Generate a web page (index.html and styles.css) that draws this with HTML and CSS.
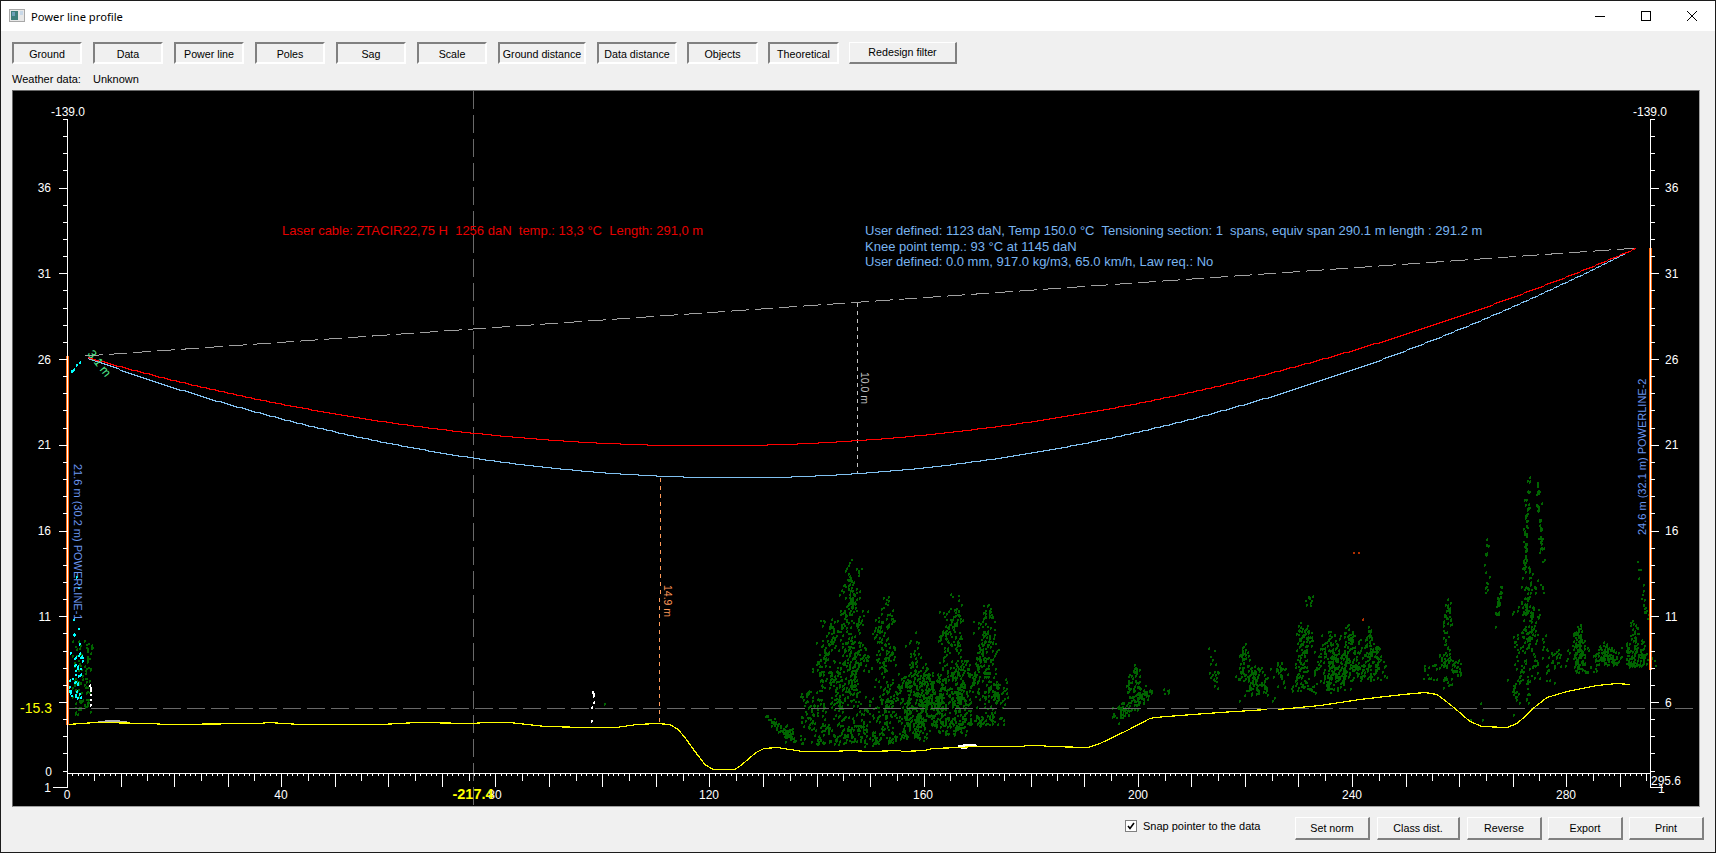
FILE: index.html
```html
<!DOCTYPE html>
<html lang="en">
<head>
<meta charset="utf-8">
<title>Power line profile</title>
<link rel="stylesheet" href="styles.css">
</head>
<body>
<div class="window">
  <header class="titlebar">
    <svg class="app-icon" width="16" height="14" viewBox="0 0 16 14">
      <rect x="0.5" y="0.5" width="15" height="12" fill="#e8e8e8" stroke="#a8a8a8"/>
      <rect x="2" y="2" width="7" height="9" fill="#3f7f7a"/>
      <rect x="3" y="3" width="3" height="4" fill="#6fa0b8"/>
      <rect x="11" y="2" width="3" height="4" fill="#c8d8e8"/>
    </svg>
    <span class="title">Power line profile</span>
    <div class="win-controls">
      <svg class="win-btn" width="46" height="31" viewBox="0 0 46 31"><path class="glyph" d="M18 15.5h10"/></svg>
      <svg class="win-btn" width="46" height="31" viewBox="0 0 46 31"><rect class="glyph" x="18.5" y="10.5" width="9" height="9"/></svg>
      <svg class="win-btn" width="46" height="31" viewBox="0 0 46 31"><path class="glyph" d="M18 10l10 10M28 10l-10 10"/></svg>
    </div>
  </header>

  <div class="client">
    <div class="toolbar">
      <button class="btn sunken w70">Ground</button>
      <button class="btn sunken w70">Data</button>
      <button class="btn sunken w70">Power line</button>
      <button class="btn sunken w70">Poles</button>
      <button class="btn sunken w70">Sag</button>
      <button class="btn sunken w70">Scale</button>
      <button class="btn sunken w88">Ground distance</button>
      <button class="btn sunken w80">Data distance</button>
      <button class="btn sunken w71 tight">Objects</button>
      <button class="btn sunken w71 tight">Theoretical</button>
      <button class="btn raised w108 tight">Redesign filter</button>
    </div>

    <div class="weather"><span class="weather-key">Weather data:</span><span>Unknown</span></div>

    <div class="chart">
      <svg id="plot" class="plot" width="1686" height="715" viewBox="13 91 1686 715">
        <g id="points"></g>
        <line class="dash-h" x1="67" y1="708.5" x2="1693" y2="708.5"/>
        <line class="dash-v" x1="473.5" y1="91" x2="473.5" y2="806"/>
        <line class="chord" x1="85" y1="356" x2="1638" y2="248"/>
        <line class="dot-orange" x1="660.5" y1="478" x2="659.5" y2="723"/>
        <line class="dot-grey" x1="857.5" y1="303" x2="857.5" y2="473"/>
        <g id="curves"></g>
        <rect class="pole" x="66" y="356" width="3" height="369"/>
        <rect class="pole" x="1649" y="248" width="3" height="422"/>
        <g id="axes"></g>

        <text class="t t-info t-red" x="282" y="235">Laser cable: ZTACIR22,75 H  1256 daN  temp.: 13,3 °C  Length: 291,0 m</text>
        <text class="t t-info t-blue" x="865" y="235">User defined: 1123 daN, Temp 150.0 °C  Tensioning section: 1  spans, equiv span 290.1 m length : 291.2 m</text>
        <text class="t t-info t-blue" x="865" y="251">Knee point temp.: 93 °C at 1145 daN</text>
        <text class="t t-info t-blue" x="865" y="266">User defined: 0.0 mm, 917.0 kg/m3, 65.0 km/h, Law req.: No</text>

        <text class="t t-small t-line" transform="translate(74 464) rotate(90)">21.6 m (30.2 m) POWERLINE-1</text>
        <text class="t t-small t-line" transform="translate(1646 535) rotate(-90)">24.6 m (32.1 m) POWERLINE-2</text>
        <text class="t t-tiny t-orange" transform="translate(664 585) rotate(90)">14.9 m</text>
        <text class="t t-tiny t-grey" transform="translate(861 372) rotate(90)">10.0 m</text>
        <text class="t t-green" transform="translate(87 354) rotate(52)">3.1 m</text>

        <text class="t end" x="85" y="116">-139.0</text>
        <text class="t end" x="1667" y="116">-139.0</text>
        <text class="t end" x="51" y="192">36</text>
        <text class="t end" x="51" y="278">31</text>
        <text class="t end" x="51" y="364">26</text>
        <text class="t end" x="51" y="449">21</text>
        <text class="t end" x="51" y="535">16</text>
        <text class="t end" x="51" y="621">11</text>
        <text class="t end" x="52" y="776">0</text>
        <text class="t end" x="51" y="792">1</text>
        <text class="t t-yellow end" x="52" y="713">-15.3</text>
        <text class="t" x="1665" y="192">36</text>
        <text class="t" x="1665" y="278">31</text>
        <text class="t" x="1665" y="364">26</text>
        <text class="t" x="1665" y="449">21</text>
        <text class="t" x="1665" y="535">16</text>
        <text class="t" x="1665" y="621">11</text>
        <text class="t" x="1665" y="707">6</text>
        <text class="t" x="1651" y="785">295.6</text>
        <text class="t" x="1658" y="793">1</text>
        <text class="t mid" x="67" y="799">0</text>
        <text class="t mid" x="281" y="799">40</text>
        <text class="t mid" x="495" y="799">80</text>
        <text class="t mid" x="709" y="799">120</text>
        <text class="t mid" x="923" y="799">160</text>
        <text class="t mid" x="1138" y="799">200</text>
        <text class="t mid" x="1352" y="799">240</text>
        <text class="t mid" x="1566" y="799">280</text>
        <text class="t t-yellow t-bold mid" x="473" y="799">-217.4</text>
      </svg>
    </div>

    <div class="footer">
      <label class="snap">
        <svg class="check" width="12" height="12" viewBox="0 0 12 12">
          <rect class="check-box" x="0.5" y="0.5" width="11" height="11"/>
          <path class="check-mark" d="M3 6l2 2.5L9 3"/>
        </svg>
        <span>Snap pointer to the data</span>
      </label>
      <button class="btn raised wf w75 wide-gap">Set norm</button>
      <button class="btn raised wf w83 wide-gap">Class dist.</button>
      <button class="btn raised wf w75">Reverse</button>
      <button class="btn raised wf w75">Export</button>
      <button class="btn raised wf w75">Print</button>
    </div>
  </div>
</div>
<script src="script.js"></script>
</body>
</html>
```
FILE: styles.css
```css
* { box-sizing: border-box; }
html, body { margin: 0; padding: 0; height: 100%; overflow: hidden; }
body { background: #1a1a1a; font-family: "Liberation Sans", Arial, sans-serif; font-size: 11px; color: #000; }

.window {
  width: 1716px; height: 853px;
  display: flex; flex-direction: column;
  border: 1px solid #1c1c1c;
  background: #f0f0f0;
}

.titlebar { height: 30px; flex: none; display: flex; align-items: center; background: #fff; padding-left: 8px; }
.app-icon { flex: none; margin-right: 6px; }
.title { font-family: "Noto Sans", sans-serif; font-size: 11.2px; }
.win-controls { margin-left: auto; display: flex; }
.win-btn { display: block; }
.glyph { fill: none; stroke: #000; stroke-width: 1; }

.client { flex: 1; display: flex; flex-direction: column; padding: 11px 0 0 11px; min-height: 0; }

.toolbar { display: flex; gap: 11px; height: 22px; flex: none; }

.btn {
  flex: none; height: 22px; padding: 1px 0 0; margin: 0;
  font: 10.7px "Liberation Sans", Arial, sans-serif; color: #000;
  background: #f0f0f0; border-style: solid; border-width: 2px; border-radius: 0;
}
.sunken { border-color: #808080 #fff #fff #808080; }
.raised { border-color: #fff #808080 #808080 #fff; border-width: 1px 2px 2px 1px; padding: 0 0 1px; }
.w70 { width: 70px; }
.w71 { width: 71px; }
.w75 { width: 75px; }
.w80 { width: 80px; }
.w83 { width: 83px; }
.w88 { width: 88px; }
.w108 { width: 108px; }
.tight { margin-left: -1px; }

.weather { height: 26px; flex: none; display: flex; align-items: center; padding-top: 3px; }
.weather-key { width: 81px; }

.chart {
  width: 1688px; height: 717px; flex: none;
  background: #000;
  border: 1px solid; border-color: #696969 #a0a0a0 #a0a0a0 #696969;
}
.plot { display: block; }

.footer { flex: 1; display: flex; align-items: flex-start; padding-top: 10px; }
.snap { display: flex; align-items: center; gap: 6px; margin-left: 1113px; width: 170px; height: 16px; margin-top: 1px; }
.check { flex: none; }
.check-box { fill: #fff; stroke: #808080; }
.check-mark { fill: none; stroke: #000; stroke-width: 1.6; }
.wf { height: 23px; margin-right: 6px; }
.wide-gap { margin-right: 7px; }

.t { font-family: "Liberation Sans", Arial, sans-serif; font-size: 12px; fill: #fff; white-space: pre; }
.t-info { font-size: 13px; }
.t-small { font-size: 11px; }
.t-tiny { font-size: 10.5px; }
.end { text-anchor: end; }
.mid { text-anchor: middle; }
.t-red { fill: #e60000; }
.t-blue { fill: #78b4f0; }
.t-line { fill: #6a96f0; }
.t-orange { fill: #ff9a5a; }
.t-grey { fill: #c4c4c4; }
.t-green { fill: #50e88c; }
.t-yellow { fill: #ffff00; font-size: 14px; }
.t-bold { font-weight: bold; font-size: 14.5px; }

.dash-h { stroke: #696969; stroke-width: 1; stroke-dasharray: 18 6; shape-rendering: crispEdges; }
.dash-v { stroke: #696969; stroke-width: 1; stroke-dasharray: 18 6; shape-rendering: crispEdges; }
.chord { stroke: #a0a0a0; stroke-width: 1; stroke-dasharray: 18 6; shape-rendering: crispEdges; }
.dot-orange { stroke: #ff9a5a; stroke-dasharray: 4 4; shape-rendering: crispEdges; }
.dot-grey { stroke: #c4c4c4; stroke-dasharray: 4 4; shape-rendering: crispEdges; }
.pole { fill: #ff6a10; }
.axis { stroke: #fff; stroke-width: 1; fill: none; shape-rendering: crispEdges; }
.curve { fill: none; stroke-width: 1; shape-rendering: crispEdges; }
.c-red { stroke: #ff0000; }
.c-blue { stroke: #80c0f0; }
.c-yellow { stroke: #ffff00; stroke-width: 1.2; }
.pts { shape-rendering: crispEdges; }
.p-green { fill: #006400; }
.p-cyan { fill: #00ffff; }
.p-white { fill: #fff; }
.p-grey { fill: #b4b4b4; }
.p-rust { fill: #b03000; }
```
FILE: script.js
```js
(function () {
  var NS = "http://www.w3.org/2000/svg";
  function el(parent, tag, cls, attrs) {
    var e = document.createElementNS(NS, tag);
    if (cls) e.setAttribute("class", cls);
    for (var k in attrs) e.setAttribute(k, attrs[k]);
    parent.appendChild(e);
    return e;
  }

  /* axes */
  var axes = document.getElementById("axes");
  var d = "M67.5 119V788M1650.5 119V788M67 773.5H1651M53 787.5H68M1650 787.5H1663";
  for (var n = -34; n <= 4; n++) {
    var y = Math.round(702 + n * 17.15) + 0.5;
    var major = ((n % 5) + 5) % 5 === 0;
    d += "M" + (major ? 59 : 63) + " " + y + "H67";
    d += "M1651 " + y + "H" + (major ? 1659 : 1655);
  }
  for (var m = 1; m <= 295; m++) {
    var x = Math.round(67 + m * 5.354) + 0.5;
    var len = m % 10 === 0 ? 14 : m % 5 === 0 ? 8 : 3;
    d += "M" + x + " 773V" + (773 + len);
  }
  el(axes, "path", "axis", { d: d });

  /* cables: y grows downward, so the sag vertex has the largest y */
  var curves = document.getElementById("curves");
  function parabola(xv, yv, a, x0, x1) {
    var s = [];
    for (var x = x0; x <= x1; x += 3) {
      s.push(x + "," + (Math.round(yv - a * (x - xv) * (x - xv)) + 0.5));
    }
    return s.join(" ");
  }
  el(curves, "polyline", "curve c-blue", { points: parabola(737, 477.3, 2.84e-4, 88, 1638) });
  el(curves, "polyline", "curve c-red", { points: parabola(708, 445.3, 2.29e-4, 88, 1638) });

  /* ground */
  var g1 = [[68,724],[96,722],[152,723],[165,724],[259,723],[269,722],[300,724],[381,724],[417,722],[473,723],[484,722],[509,722],[545,726],[586,727],[616,727],[637,724],[657,723],[670,724],[678,729],[685,737],[692,747],[698,755],[705,764],[713,769],[735,769],[742,764],[749,758],[756,752],[764,748],[777,747],[790,749],[803,751],[832,751],[850,750],[870,751],[900,750],[902,751],[925,750],[933,748],[960,747],[973,746],[1023,746],[1027,745],[1040,745],[1050,746],[1088,747],[1100,743],[1127,730],[1150,718],[1155,717],[1180,715],[1220,712],[1267,709]];
  var g2 = [[1278,709],[1320,705],[1360,699],[1403,694],[1425,692],[1437,694],[1445,700],[1455,708],[1470,721],[1482,726],[1507,727],[1517,723],[1525,716],[1533,708],[1547,697],[1567,691],[1597,685],[1617,683],[1630,684]];
  [g1, g2].forEach(function (g) {
    el(curves, "polyline", "curve c-yellow", {
      points: g.map(function (p) { return p[0] + "," + (p[1] + 0.5); }).join(" ")
    });
  });

  /* point clouds */
  var seed = 12345;
  function rnd() { seed = (seed * 1664525 + 1013904223) >>> 0; return seed / 4294967296; }
  function gauss() { return (rnd() + rnd() + rnd() - 1.5) / 0.75; }

  var paths = { green: "", cyan: "", white: "", grey: "", rust: "" };
  function dot(kind, x, y) {
    x = Math.round(x); y = Math.round(y);
    var s = "M" + x + " " + y + "h2v2h-2z";
    var r = rnd();
    if (r < 0.4) s += "M" + x + " " + (y + 2) + "h1v1h-1z";
    else if (r < 0.7) s += "M" + (x + 1) + " " + (y - 1) + "h1v1h-1z";
    paths[kind] += s;
  }
  /* stringy scatter: each seed point trails a short wandering strand */
  function strand(kind, x, y, x0, x1, y0, y1) {
    var len = 1 + Math.floor(rnd() * 5);
    for (var i = 0; i < len; i++) {
      if (x >= x0 && x <= x1 && y >= y0 && y <= y1) dot(kind, x, y);
      x += (rnd() - 0.5) * 7;
      y += 1 + rnd() * 5;
    }
  }
  /* tree: crown that widens downward, written as strands */
  function tree(cx, top, bot, hw, n) {
    var count = Math.round(n / 3);
    for (var i = 0; i < count; i++) {
      var t = Math.pow(rnd(), 0.75);
      strand("green", cx + gauss() * hw * (0.3 + 0.7 * t), top + (bot - top) * t, cx - 2 * hw, cx + 2 * hw, top, bot);
    }
  }
  function blob(kind, x0, x1, y0, y1, n) {
    for (var i = 0; i < n; i++) dot(kind, x0 + rnd() * (x1 - x0), y0 + rnd() * (y1 - y0));
  }
  function diag(x0, y0, x1, y1, w, n) {
    for (var i = 0; i < n; i++) {
      var t = rnd();
      dot("green", x0 + (x1 - x0) * t + gauss() * w, y0 + (y1 - y0) * t + gauss() * w);
    }
  }

  /* left pole */
  blob("green", 72, 92, 640, 712, 95);
  blob("green", 74, 78, 712, 716, 3);
  blob("cyan", 69, 82, 655, 700, 34);
  blob("cyan", 70, 82, 622, 655, 6);
  blob("cyan", 73, 79, 575, 622, 3);
  blob("cyan", 69, 73, 366, 372, 4);
  dot("cyan", 76, 364); dot("cyan", 79, 362);
  [[89,685],[90,687],[90,690],[90,694],[90,699],[90,704]].forEach(function (p) { dot("white", p[0], p[1]); });

  /* first forest block */
  diag(766, 716, 792, 738, 3, 60);
  blob("green", 785, 795, 725, 744, 14);
  blob("green", 800, 812, 690, 745, 30);
  tree(826, 602, 744, 19, 250);
  tree(851, 558, 746, 19, 450);
  tree(885, 590, 745, 18, 270);
  tree(906, 670, 740, 14, 70);
  tree(915, 622, 738, 15, 210);
  tree(928, 660, 725, 18, 210);
  tree(950, 587, 735, 18, 330);
  tree(962, 655, 728, 16, 120);
  tree(985, 598, 725, 16, 270);
  blob("green", 992, 999, 683, 705, 24);

  /* small middle clusters */
  diag(1116, 717, 1150, 690, 5, 70);
  tree(1135, 660, 700, 9, 70);
  blob("green", 1112, 1122, 705, 718, 14);
  blob("green", 1162, 1168, 689, 695, 5);
  blob("green", 1208, 1218, 647, 688, 20);
  tree(1243, 642, 680, 8, 60);
  tree(1258, 665, 695, 10, 80);
  dot("green", 1239, 700); dot("green", 1272, 700); dot("green", 1274, 697);
  tree(1278, 655, 687, 8, 35);
  tree(1305, 620, 690, 13, 150);
  blob("green", 1305, 1312, 595, 608, 9);
  tree(1327, 625, 692, 14, 160);
  tree(1347, 622, 680, 14, 140);
  tree(1372, 625, 680, 15, 140);
  blob("green", 1422, 1438, 663, 680, 14);
  tree(1447, 594, 625, 5, 30);
  tree(1445, 628, 668, 6, 36);
  blob("green", 1450, 1460, 658, 675, 26);
  blob("green", 1443, 1452, 675, 688, 12);

  /* right block */
  diag(1487, 532, 1486, 593, 2, 16);
  diag(1501, 583, 1497, 612, 2, 22);
  dot("green", 1495, 626);
  dot("green", 1470, 719); dot("green", 1482, 719); dot("green", 1480, 703); dot("green", 1513, 714);
  diag(1528, 477, 1524, 570, 2, 55);
  diag(1537, 480, 1542, 560, 2, 42);
  tree(1528, 560, 683, 15, 210);
  diag(1512, 685, 1518, 702, 2, 14);
  blob("green", 1526, 1529, 668, 702, 9);
  blob("green", 1546, 1560, 648, 670, 26);
  blob("green", 1545, 1555, 680, 684, 3);
  tree(1579, 622, 672, 10, 140);
  tree(1606, 638, 664, 12, 130);
  tree(1634, 620, 666, 11, 140);
  diag(1638, 556, 1646, 622, 2, 18);
  dot("green", 604, 703);

  /* objects on the ground */
  paths.grey += "M98 721h29v2h-29zM105 720h15v1h-15z";
  paths.white += "M958 745h19v2h-19zM963 744h13v1h-13zM961 747h6v2h-6z";
  [[592,691],[593,693],[593,695],[593,702],[591,707],[591,720]].forEach(function (p) { dot("white", p[0], p[1]); });
  dot("rust", 1353, 552); dot("rust", 1358, 552); dot("rust", 1362, 619);

  var g = document.getElementById("points");
  Object.keys(paths).forEach(function (k) {
    el(g, "path", "pts p-" + k, { d: paths[k] });
  });
})();
```
